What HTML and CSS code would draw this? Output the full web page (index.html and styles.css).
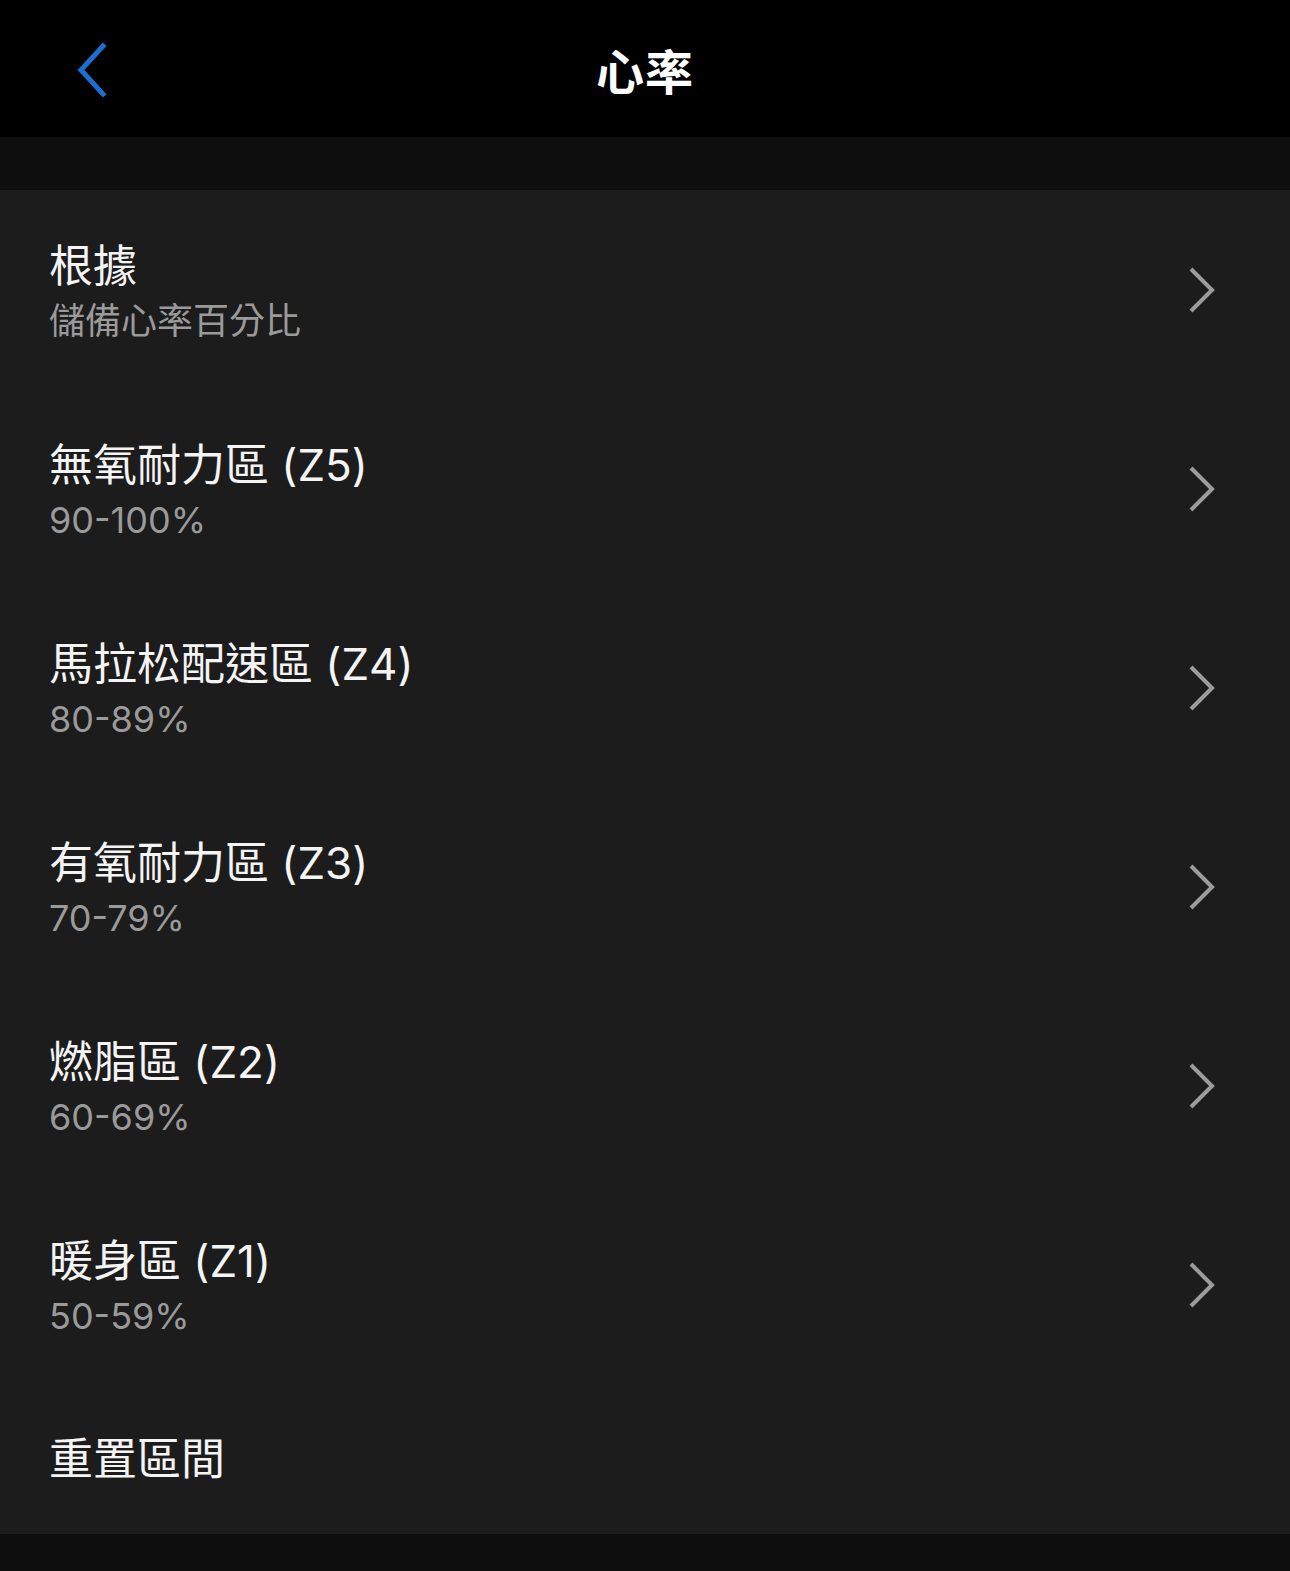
FILE: index.html
```html
<!DOCTYPE html>
<html lang="zh-Hant">
<head>
  <meta charset="UTF-8">
  <title>心率</title>
  <link rel="stylesheet" href="styles.css">
</head>
<body>

<header class="top-bar">
  <a class="back-btn" href="#" aria-label="返回">
    <svg width="34" height="56" viewBox="0 0 34 56">
      <path d="M28 4 L6 28 L28 52" fill="none" stroke="#1b6fd2" stroke-width="5" stroke-linecap="square"/>
    </svg>
  </a>
  <h1 class="page-title">心率</h1>
  <span></span>
</header>

<div class="spacer"></div>

<ul class="zone-list">
  <li class="zone-row">
    <div class="zone-text">
      <span class="zone-name">根據</span>
      <span class="zone-value">儲備心率百分比</span>
    </div>
    <svg class="chevron" width="30" height="48" viewBox="0 0 30 48"><path d="M4 3 L25 24 L4 45" /></svg>
  </li>
  <li class="zone-row">
    <div class="zone-text">
      <span class="zone-name">無氧耐力區 (Z5)</span>
      <span class="zone-value">90-100%</span>
    </div>
    <svg class="chevron" width="30" height="48" viewBox="0 0 30 48"><path d="M4 3 L25 24 L4 45" /></svg>
  </li>
  <li class="zone-row">
    <div class="zone-text">
      <span class="zone-name">馬拉松配速區 (Z4)</span>
      <span class="zone-value">80-89%</span>
    </div>
    <svg class="chevron" width="30" height="48" viewBox="0 0 30 48"><path d="M4 3 L25 24 L4 45" /></svg>
  </li>
  <li class="zone-row">
    <div class="zone-text">
      <span class="zone-name">有氧耐力區 (Z3)</span>
      <span class="zone-value">70-79%</span>
    </div>
    <svg class="chevron" width="30" height="48" viewBox="0 0 30 48"><path d="M4 3 L25 24 L4 45" /></svg>
  </li>
  <li class="zone-row">
    <div class="zone-text">
      <span class="zone-name">燃脂區 (Z2)</span>
      <span class="zone-value">60-69%</span>
    </div>
    <svg class="chevron" width="30" height="48" viewBox="0 0 30 48"><path d="M4 3 L25 24 L4 45" /></svg>
  </li>
  <li class="zone-row">
    <div class="zone-text">
      <span class="zone-name">暖身區 (Z1)</span>
      <span class="zone-value">50-59%</span>
    </div>
    <svg class="chevron" width="30" height="48" viewBox="0 0 30 48"><path d="M4 3 L25 24 L4 45" /></svg>
  </li>
  <li class="reset-row">
    <span class="zone-name">重置區間</span>
  </li>
</ul>

</body>
</html>
```
FILE: styles.css
```css
html, body {
  margin: 0;
  padding: 0;
}
body {
  background-color: #0e0e0e;
  color: #f4f4f4;
  font-family: "Inter", "Noto Sans CJK TC", sans-serif;
  min-height: 1571px;
}
.top-bar {
  height: 137px;
  background-color: #000;
  display: grid;
  grid-template-columns: 1fr auto 1fr;
  align-items: center;
}
.back-btn {
  display: flex;
  padding-left: 75px;
  padding-top: 2px;
}
.page-title {
  margin: 0;
  font-family: "Noto Sans CJK TC", sans-serif;
  font-size: 48px;
  font-weight: 700;
  letter-spacing: 1px;
  color: #fff;
}
.spacer {
  height: 53px;
}
.zone-list {
  list-style: none;
  margin: 0;
  padding: 0;
  background-color: #1c1c1c;
}
.zone-row {
  height: 199px;
  display: flex;
  align-items: center;
  justify-content: space-between;
  padding: 0 73px 0 49px;
}
.zone-text {
  display: flex;
  flex-direction: column;
  margin-top: 8px;
}
.zone-name {
  font-size: 44px;
  line-height: 54px;
  color: #f4f4f4;
}
.zone-value {
  font-size: 36px;
  line-height: 56px;
  color: #9a9a9a;
}
.chevron path {
  fill: none;
  stroke: #9c9c9c;
  stroke-width: 4;
}
.reset-row {
  height: 150px;
  display: flex;
  align-items: center;
  padding: 0 49px;
  box-sizing: border-box;
}
```
